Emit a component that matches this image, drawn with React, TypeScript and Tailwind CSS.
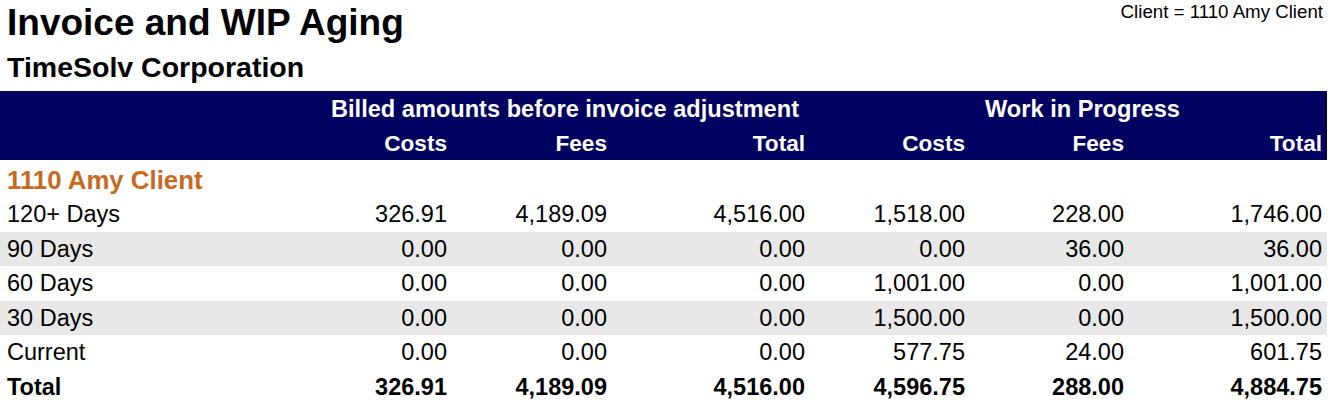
import React from "react";

const rows: { label: string; vals: string[]; shaded: boolean }[] = [
  { label: "120+ Days", vals: ["326.91", "4,189.09", "4,516.00", "1,518.00", "228.00", "1,746.00"], shaded: false },
  { label: "90 Days", vals: ["0.00", "0.00", "0.00", "0.00", "36.00", "36.00"], shaded: true },
  { label: "60 Days", vals: ["0.00", "0.00", "0.00", "1,001.00", "0.00", "1,001.00"], shaded: false },
  { label: "30 Days", vals: ["0.00", "0.00", "0.00", "1,500.00", "0.00", "1,500.00"], shaded: true },
  { label: "Current", vals: ["0.00", "0.00", "0.00", "577.75", "24.00", "601.75"], shaded: false },
];

const totals = ["326.91", "4,189.09", "4,516.00", "4,596.75", "288.00", "4,884.75"];

const gridCols = "grid grid-cols-[292px_160px_160px_198px_160px_159px_198px] w-[1327px]";

export default function App() {
  return (
    <div className="w-[1331px] h-[406px] bg-white text-black overflow-hidden" style={{ fontFamily: '"Liberation Sans", Arial, sans-serif' }}>
      <div className="flex justify-between h-[91px]">
        <div className="pl-[7px] pt-[1px] flex flex-col">
          <div className="text-[37px] font-bold leading-[44px]">Invoice and WIP Aging</div>
          <div className="text-[28.5px] font-bold leading-[44px]">TimeSolv Corporation</div>
        </div>
        <div className="pr-[8px] pt-[1px] text-[18.7px] leading-[22px]">Client = 1110 Amy Client</div>
      </div>
      <div className={`${gridCols} bg-[#000060] text-white font-bold text-[22.6px]`}>
        <div className="h-[34.5px]" />
        <div className="col-span-3 h-[34.5px] flex items-center justify-center pl-[28px] pt-[2px] text-[23.6px]">Billed amounts before invoice adjustment</div>
        <div className="col-span-3 h-[34.5px] flex items-center justify-center pl-[28px] pt-[2px] text-[23.6px]">Work in Progress</div>
        <div className="h-[34.5px]" />
        {["Costs", "Fees", "Total", "Costs", "Fees", "Total"].map((h, i) => (
          <div key={i} className="h-[34.5px] flex items-center justify-end pr-[5px] pt-[2px]">{h}</div>
        ))}
      </div>
      <div className="h-[37px] flex items-center pl-[7px] pt-[3px] text-[25.8px] font-bold text-[#c8691f]">1110 Amy Client</div>
      {rows.map((r) => (
        <div key={r.label} className={`${gridCols} text-[23.5px] ${r.shaded ? "bg-[#e8e8e8]" : ""}`}>
          <div className="h-[34.5px] flex items-center pl-[7px] pt-[1px]">{r.label}</div>
          {r.vals.map((v, i) => (
            <div key={i} className="h-[34.5px] flex items-center justify-end pr-[5px] pt-[1px]">{v}</div>
          ))}
        </div>
      ))}
      <div className={`${gridCols} text-[23.5px] font-bold`}>
        <div className="h-[34.5px] flex items-center pl-[7px] pt-[1px]">Total</div>
        {totals.map((v, i) => (
          <div key={i} className="h-[34.5px] flex items-center justify-end pr-[5px] pt-[1px]">{v}</div>
        ))}
      </div>
    </div>
  );
}
